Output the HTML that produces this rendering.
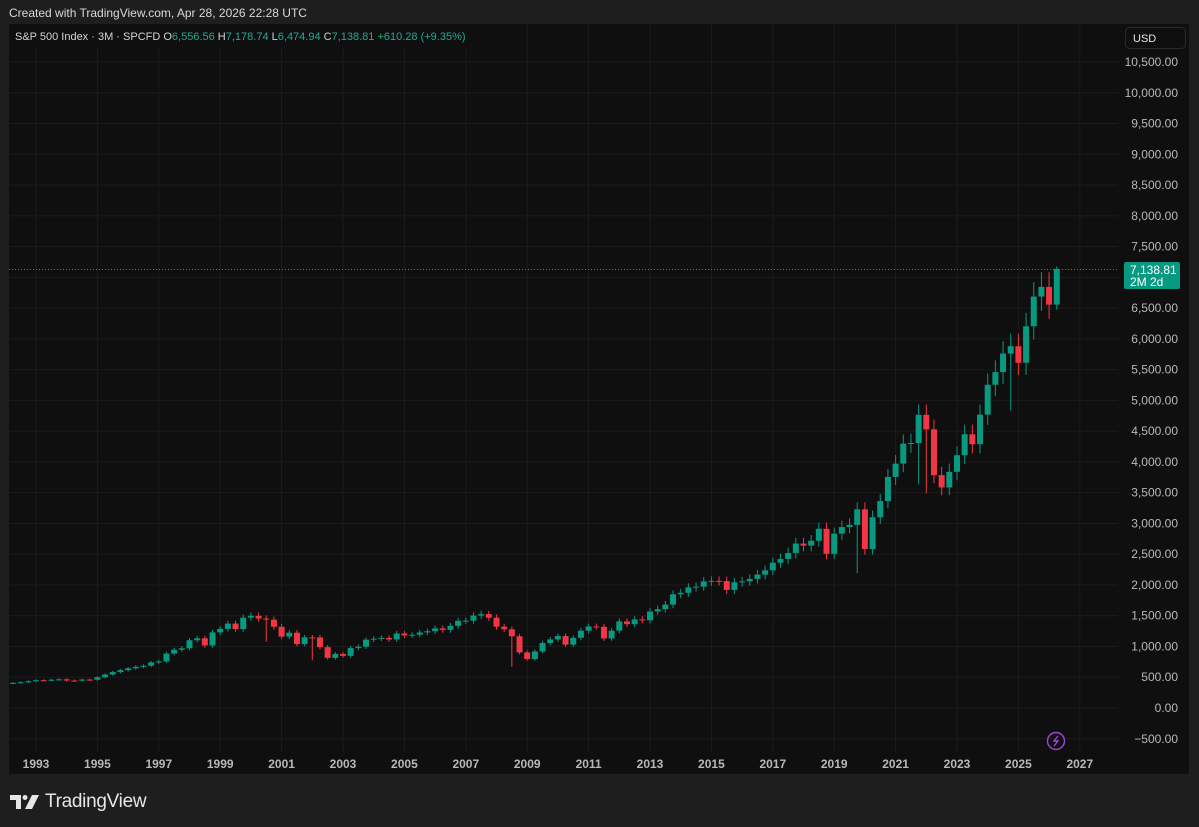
<!DOCTYPE html>
<html><head><meta charset="utf-8"><style>
html,body{margin:0;padding:0;width:1199px;height:827px;background:#1e1e1e;overflow:hidden;font-family:"Liberation Sans",sans-serif}
#hdr{position:absolute;left:9px;top:6px;color:#d9d9d9;font-size:12px}
#panel{position:absolute;left:9px;top:24px;width:1180px;height:750px;background:#0f0f0f}
#logo{position:absolute;left:10px;top:791px;color:#e6e6e6;font-size:19px;display:flex;align-items:center;gap:5px}
</style></head><body>
<div id="hdr">Created with TradingView.com, Apr 28, 2026 22:28 UTC</div>
<div id="panel"></div>
<svg id="s" width="1199" height="827" style="position:absolute;left:0;top:0"></svg>
<div id="logo"><svg width="30" height="14" viewBox="0 0 30 14"><path d="M0 0h11v14h-5V5H0z" fill="#e6e6e6"/><circle cx="15" cy="2.5" r="2.5" fill="#e6e6e6"/><path d="M22 0h7l-7 14h-7z" fill="#e6e6e6"/></svg><span style="letter-spacing:-0.3px">TradingView</span></div>
<script>
var s=document.getElementById('s'),h='<defs><clipPath id="cp"><rect x="9" y="24" width="1109" height="730"/></clipPath></defs>';
function Y(p){return 708-p*0.06152}
function X(t){return 36+(t-1993)*30.7}
for(var p=-500;p<=10500;p+=500){var y=Y(p);h+='<line x1="9" x2="1118" y1="'+y+'" y2="'+y+'" stroke="#1b1b1b"/>';
h+='<text x="1178" y="'+(y+4)+'" fill="#b8b8b8" font-size="12" text-anchor="end" font-family="Liberation Sans">'+(p<0?'−':'')+Math.abs(p).toLocaleString('en-US')+'.00</text>';}
for(var yr=1993;yr<=2027;yr+=2){var x=X(yr);h+='<line x1="'+x+'" x2="'+x+'" y1="24" y2="752" stroke="#1b1b1b"/>';
h+='<text x="'+x+'" y="768" fill="#b8b8b8" font-size="12" font-weight="bold" text-anchor="middle" font-family="Liberation Sans">'+yr+'</text>';}
var c=[417,404,408,418,435,451,450,459,466,446,444,462,459,500,544,584,615,645,670,687,740,757,885,947,970,1101,1133,1017,1229,1286,1372,1282,1469,1498,1454,1436,1320,1160,1224,1040,1148,1147,989,815,879,848,974,996,1111,1126,1140,1114,1211,1180,1191,1228,1248,1294,1270,1335,1418,1420,1503,1526,1468,1322,1280,1166,903,797,919,1057,1115,1169,1030,1141,1257,1325,1320,1131,1257,1408,1362,1440,1426,1569,1606,1681,1848,1872,1960,1972,2058,2067,2063,1920,2043,2059,2098,2168,2238,2362,2423,2519,2673,2640,2718,2913,2506,2834,2941,2976,3230,2584,3100,3363,3756,3972,4297,4307,4766,4530,3785,3585,3839,4109,4450,4288,4769,5254,5460,5762,5881,5611,6205,6688,6845,6556,7138];
var off=4;var lows={108:2191,117:3491,128:4835,37:776,63:666,31:1080,116:3636};
h+='<g clip-path="url(#cp)">';
for(var i=1;i<c.length;i++){var o=c[i-1],cl=c[i],t=1992+(i-1)*0.25,x=X(t);
var k=i-off;var hi=Math.max(o,cl)*1.035,lo=lows[k]||Math.min(o,cl)*0.965;if(i==c.length-1){hi=7178;lo=6475;}
var col=cl>=o?'#089981':'#f23645';
h+='<line x1="'+x+'" x2="'+x+'" y1="'+Y(hi)+'" y2="'+Y(lo)+'" stroke="'+col+'"/>';
var y1=Y(Math.max(o,cl)),y2=Y(Math.min(o,cl));h+='<rect x="'+(x-3)+'" y="'+y1+'" width="6" height="'+Math.max(1,y2-y1)+'" fill="'+col+'"/>';}
h+='</g>';
h+='<line x1="9" x2="1118" y1="269.5" y2="269.5" stroke="#089981" stroke-dasharray="1 2"/>';
h+='<rect x="1124" y="262" width="56" height="27" rx="2" fill="#089981"/><text x="1130" y="274" fill="#fff" font-size="12" font-family="Liberation Sans">7,138.81</text><text x="1130" y="286" fill="#fff" font-size="12" font-family="Liberation Sans">2M 2d</text>';
h+='<rect x="1125.5" y="27.5" width="60" height="21" rx="4" fill="#0f0f0f" stroke="#2a2a2a"/><text x="1133" y="42" fill="#e6e6e6" font-size="11" font-family="Liberation Sans">USD</text>';
h+='<circle cx="1056" cy="741" r="8.5" fill="none" stroke="#a046d6" stroke-width="1.4"/><path d="M1058 736l-4 5h4l-4 5" fill="none" stroke="#a046d6" stroke-width="1.4"/>';
h+='<rect x="10" y="25" width="458" height="23" fill="#0f0f0f"/><text x="15" y="40" font-size="11" font-family="Liberation Sans" fill="#d1d4dc">S&amp;P 500 Index · 3M · SPCFD  O<tspan fill="#22ab94">6,556.56</tspan>  H<tspan fill="#22ab94">7,178.74</tspan>  L<tspan fill="#22ab94">6,474.94</tspan>  C<tspan fill="#22ab94">7,138.81  +610.28 (+9.35%)</tspan></text>';
s.innerHTML=h;
</script>
</body></html>
